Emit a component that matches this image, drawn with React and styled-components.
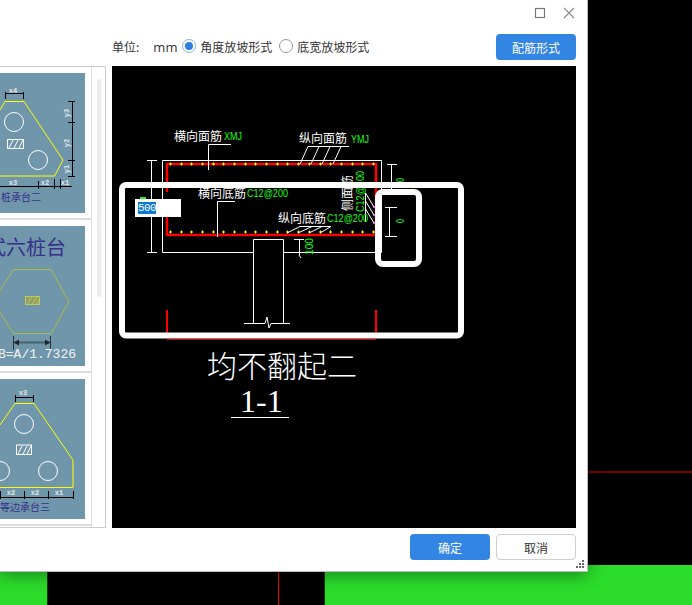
import React from 'react';
import styled, { createGlobalStyle } from 'styled-components';

const GlobalStyle = createGlobalStyle`
  html, body {
    margin: 0;
    padding: 0;
    background: #000;
    overflow: hidden;
  }
  body {
    font-family: "Noto Sans CJK SC", "Liberation Sans", sans-serif;
  }
`;

const Page = styled.div`
  position: relative;
  width: 692px;
  height: 605px;
  display: flex;
  flex-direction: column;
  overflow: hidden;
`;

const BackdropTop = styled.div`
  position: relative;
  height: 565px;
  background: #000;
`;

const BackdropLine = styled.div`
  position: absolute;
  left: 588px;
  right: 0;
  top: 471px;
  height: 2px;
  background: #7c0000;
`;

const BackdropBottom = styled.div`
  flex: 1;
  display: flex;
`;

const GreenStrip = styled.div`
  flex: ${p => (p.$grow ? 1 : 'none')};
  width: ${p => (p.$grow ? 'auto' : '47px')};
  background: #2bdc2b;
`;

const BlackStrip = styled.div`
  position: relative;
  width: 278px;
  background: #000;
  border-left: 1px solid #0d3a0d;
  border-right: 1px solid #0d3a0d;
  box-sizing: border-box;
`;

const BlackStripLine = styled.div`
  position: absolute;
  left: 230px;
  top: 0;
  bottom: 0;
  width: 1px;
  background: #f00000;
`;

const Dialog = styled.div`
  position: absolute;
  left: 0;
  top: 0;
  width: 588px;
  height: 572px;
  box-sizing: border-box;
  display: flex;
  flex-direction: column;
  background: #fff;
  border-right: 1px solid #bdbdbd;
  border-bottom: 1px solid #bdbdbd;
  box-shadow: 0 3px 16px rgba(0, 0, 0, 0.4);
`;

const TitleBar = styled.div`
  height: 33px;
  flex: none;
  display: flex;
  justify-content: flex-end;
  align-items: flex-start;
  gap: 17px;
  padding: 7px 12px 0 0;
  box-sizing: border-box;
`;

const WindowIcon = styled.svg`
  display: block;
  width: 12px;
  height: 12px;
  fill: none;
  stroke: ${p => p.$stroke};
  stroke-width: 1.2;
`;

const Toolbar = styled.div`
  height: 33px;
  flex: none;
  display: flex;
  align-items: flex-start;
  padding: 1px 11px 0 112px;
  box-sizing: border-box;
  font-size: 12px;
  color: #333;
`;

const ToolLabel = styled.span`
  margin-top: 4px;
  line-height: 18px;
  margin-right: ${p => p.$gap || 0}px;
  white-space: nowrap;
`;

const Unit = styled(ToolLabel)`
  font-family: "Open Sans", "Liberation Sans", sans-serif;
  font-size: 13px;
  width: 29px;
`;

const Radio = styled.span`
  flex: none;
  width: 14px;
  height: 14px;
  margin: 5px 4px 0 0;
  box-sizing: border-box;
  border-radius: 50%;
  border: 1px solid ${p => (p.$on ? '#8ab4e8' : '#9a9a9a')};
  background: #fff;
  display: flex;
  align-items: center;
  justify-content: center;
  &::after {
    content: '';
    width: 8px;
    height: 8px;
    border-radius: 50%;
    background: ${p => (p.$on ? '#2f7fe3' : 'transparent')};
  }
`;

const Button = styled.div`
  width: 80px;
  height: 26px;
  flex: none;
  box-sizing: border-box;
  border-radius: 4px;
  display: flex;
  align-items: center;
  justify-content: center;
  font-size: 12px;
  background: ${p => (p.$primary ? '#3385e4' : '#fff')};
  color: ${p => (p.$primary ? '#fff' : '#333')};
  border: ${p => (p.$primary ? 'none' : '1px solid #cfcfcf')};
`;

const RightButton = styled(Button)`
  margin-left: auto;
`;

const Body = styled.div`
  height: 462px;
  flex: none;
  display: flex;
  gap: 6px;
`;

const ListBox = styled.div`
  width: 106px;
  flex: none;
  box-sizing: border-box;
  display: flex;
  border-top: 1px solid #ccc;
  border-right: 1px solid #ccc;
  border-bottom: 1px solid #ccc;
`;

const Items = styled.div`
  width: 92px;
  flex: none;
  box-sizing: border-box;
  border-right: 1px solid #ddd;
`;

const Item = styled.div`
  height: 153px;
  box-sizing: border-box;
  padding-top: 6px;
  border-bottom: 2px solid #dcdcdc;
`;

const Thumb = styled.svg`
  display: block;
  width: 85px;
  height: 140px;
  background: #7096ab;
  fill: none;
  font-family: "Noto Sans CJK SC", sans-serif;
`;

const DimLabel = styled.text`
  font-family: "Liberation Mono", monospace;
  font-size: 7px;
  font-weight: bold;
  fill: #e6e6e6;
  stroke: none;
  text-anchor: middle;
`;

const Caption = styled.text`
  font-size: ${p => p.$size || 10}px;
  fill: #37308a;
  stroke: none;
  text-anchor: end;
`;

const Formula = styled.text`
  font-family: "Liberation Mono", monospace;
  font-size: 13px;
  fill: #f2f2f2;
  stroke: none;
  text-anchor: end;
`;

const ScrollTrack = styled.div`
  flex: 1;
  padding: 12px 0 0 5px;
`;

const ScrollThumb = styled.div`
  width: 4px;
  height: 218px;
  border-radius: 2px;
  background: #ececec;
`;

const Canvas = styled.div`
  position: relative;
  width: 464px;
  flex: none;
  background: #000;
  overflow: hidden;
`;

const Drawing = styled.svg`
  display: block;
  width: 464px;
  height: 462px;
  fill: none;
  stroke: #fff;
  font-family: "Noto Sans CJK SC", sans-serif;
`;

const WhiteText = styled.text`
  font-size: ${p => p.$size || 12}px;
  font-weight: ${p => (p.$size ? 300 : 400)};
  fill: #fff;
  stroke: none;
`;

const GreenText = styled.text`
  font-family: "Liberation Sans", sans-serif;
  font-size: 11px;
  fill: #19ff19;
  stroke: none;
`;

const SerifText = styled.text`
  font-family: "Liberation Serif", serif;
  font-size: ${p => p.$size}px;
  fill: #fff;
  stroke: none;
`;

const EditBox = styled.div`
  position: absolute;
  left: 23px;
  top: 133px;
  width: 46px;
  height: 18px;
  box-sizing: border-box;
  padding: 3px 0 0 3px;
  background: #fff;
  display: flex;
  align-items: flex-start;
`;

const Selected = styled.span`
  font-family: "Liberation Mono", monospace;
  font-size: 11px;
  line-height: 12px;
  height: 12px;
  width: 18px;
  letter-spacing: -0.6px;
  background: #0a78d7;
  color: #fff;
`;

const Footer = styled.div`
  flex: 1;
  position: relative;
  display: flex;
  justify-content: flex-end;
  gap: 6px;
  padding: 6px 11px 0 0;
`;

const Grip = styled.svg`
  position: absolute;
  right: 3px;
  bottom: 3px;
  width: 8px;
  height: 8px;
  fill: #666;
`;

const dotXs = Array.from({ length: 20 }, (_, i) => Math.round(170 + i * 10.68) + 0.5);

function Dot({ x, y }) {
  return <path d={`M${x - 1.5} ${y}h3M${x} ${y - 1.5}v3`} stroke="#ffff00" />;
}

function ThumbOne() {
  return (
    <Thumb viewBox="0 73 85 140">
      <path d="M0 110L5 101.5H24L63 160L54.5 176H0" stroke="#ffff00" />
      <circle cx="14" cy="122" r="9.5" stroke="#fff" />
      <circle cx="38" cy="160" r="9.5" stroke="#fff" />
      <rect x="7.5" y="139.5" width="16" height="9" stroke="#fff" />
      <path d="M9 148l4-8M14 148l4-8M19 148l4-8" stroke="#fff" />
      <path d="M5.5 92v7M5.5 93.5H23.5M23.5 92v7" stroke="#000" />
      <DimLabel x="13" y="93">x4</DimLabel>
      <path d="M72.5 101.5V176.5M68 101.5h7M68 122.5h7M68 160.5h7M68 176.5h7" stroke="#000" />
      <DimLabel transform="translate(69 113) rotate(-90)">y3</DimLabel>
      <DimLabel transform="translate(69 143) rotate(-90)">y2</DimLabel>
      <DimLabel transform="translate(69 169) rotate(-90)">y1</DimLabel>
      <path d="M0 186.5H72M38.5 181v8M54.5 179v10M60.5 179v10" stroke="#000" />
      <DimLabel x="13" y="185">x3</DimLabel>
      <DimLabel x="45" y="185">x2</DimLabel>
      <DimLabel x="65" y="185">x1</DimLabel>
      <Caption x="41" y="201">桩承台二</Caption>
    </Thumb>
  );
}

function ThumbTwo() {
  return (
    <Thumb viewBox="0 226 85 140">
      <Caption x="66" y="255" $size={20}>式六桩台</Caption>
      <path d="M13.5 269.5H51L69 301.5L51 333.5H13.5L-7 301.5Z" stroke="#b3ba4a" />
      <rect x="25.5" y="296.5" width="14" height="8" stroke="#c2c84a" fill="#8f9f70" />
      <path d="M27 304l5-7M32 304l5-7M36 304l3-4" stroke="#c2c84a" />
      <path d="M13.5 336v14M50.5 336v14" stroke="#333" />
      <path d="M14 342.5H50" stroke="#47606e" strokeWidth="2" />
      <path d="M14 342.5l5-3v6ZM50 342.5l-5-3v6Z" fill="#222" stroke="none" />
      <Formula x="76" y="358">B=A/1.7326</Formula>
    </Thumb>
  );
}

function ThumbThree() {
  return (
    <Thumb viewBox="0 379 85 140">
      <path d="M0 425L15 403.5H34L73 460V487.5H0" stroke="#ffff00" />
      <circle cx="24" cy="424" r="9.5" stroke="#fff" />
      <circle cx="48" cy="471" r="9.5" stroke="#fff" />
      <circle cx="0" cy="471" r="9.5" stroke="#fff" />
      <rect x="16.5" y="445" width="15" height="9.5" stroke="#fff" />
      <path d="M18 454l4-8M23 454l4-8M27 454l4-8" stroke="#fff" />
      <path d="M15.5 395v7M15.5 397.5H33.5M33.5 395v7" stroke="#000" />
      <DimLabel x="23" y="395">x3</DimLabel>
      <path d="M0 497.5H73.5M0.5 491v8M24.5 491v8M48.5 491v8M73.5 491v8" stroke="#000" />
      <DimLabel x="11" y="495">x2</DimLabel>
      <DimLabel x="35" y="495">x2</DimLabel>
      <DimLabel x="59" y="495">x1</DimLabel>
      <Caption x="50" y="511">等边承台三</Caption>
    </Thumb>
  );
}

function SectionDrawing() {
  return (
    <Drawing viewBox="112 66 464 462">
      {/* concrete outline and column */}
      <path d="M162.5 252.5V160.5H381.5V252.5H283.5M253.5 252.5H162.5" />
      <path d="M253.5 323V239.5H283.5V323" />
      <path d="M244 323.5H265L267 317L269 328L271 323.5H290" />

      {/* rebar */}
      <path d="M167 192V164H376V235H167V217" stroke="#ff0000" strokeWidth="2.5" />
      {dotXs.map(x => <Dot key={`t${x}`} x={x} y={164} />)}
      {dotXs.map(x => <Dot key={`b${x}`} x={x} y={232} />)}
      <path d="M167 310V334M376 310V334" stroke="#ff0000" strokeWidth="2" />
      <path d="M167 339.5H376" stroke="#e00000" />
      <rect x="373" y="206" width="2" height="2" fill="#ff33ff" stroke="none" />
      <rect x="373" y="214" width="2" height="2" fill="#ff33ff" stroke="none" />
      <rect x="373" y="222" width="2" height="2" fill="#ff33ff" stroke="none" />

      {/* leaders */}
      <path d="M208.5 170V144.5H231" />
      <path d="M349 146.5H308M308 146.5L300 164M319 146.5L311 164M330 146.5L322 164M341 146.5L333 164" />
      <path d="M217.5 237V201.5H235" />
      <path d="M331 226.5H300M300 226.5L287 233M312 226.5L298 233M322 226.5L309 233M331 226.5L320 233" />
      <path d="M365.5 193V222M365.5 193L374 207M365.5 201L374 215M365.5 209L374 223" />

      {/* dimensions */}
      <path d="M151.5 160V253M147 160.5H157M147 252.5H157" />
      <path d="M299.5 239V255M294 239.5H304M299 255l2 3" />
      <path d="M391.5 164V195M387 164.5H397" />
      <path d="M389.5 207V237M385 207.5H397M385 236.5H397" />
      <rect x="140" y="197" width="6" height="2" fill="#19ff19" stroke="none" />

      {/* labels */}
      <WhiteText x="174" y="141">横向面筋</WhiteText>
      <GreenText x="224" y="140" textLength="18" lengthAdjust="spacingAndGlyphs">XMJ</GreenText>
      <WhiteText x="299" y="143">纵向面筋</WhiteText>
      <GreenText x="351" y="143" textLength="18" lengthAdjust="spacingAndGlyphs">YMJ</GreenText>
      <WhiteText x="198" y="198">横向底筋</WhiteText>
      <GreenText x="247" y="197" textLength="41" lengthAdjust="spacingAndGlyphs">C12@200</GreenText>
      <WhiteText x="278" y="223">纵向底筋</WhiteText>
      <GreenText x="327" y="222" textLength="41" lengthAdjust="spacingAndGlyphs">C12@200</GreenText>
      <WhiteText transform="translate(352 211) rotate(-90)">侧面筋</WhiteText>
      <GreenText transform="translate(364 212) rotate(-90)" textLength="41" lengthAdjust="spacingAndGlyphs">C12@200</GreenText>
      <GreenText transform="translate(313 255) rotate(-90)" textLength="17" lengthAdjust="spacingAndGlyphs">100</GreenText>
      <GreenText transform="translate(404 182) rotate(-90)" textLength="4" lengthAdjust="spacingAndGlyphs">0</GreenText>
      <GreenText transform="translate(404 223) rotate(-90)" textLength="4" lengthAdjust="spacingAndGlyphs">0</GreenText>

      {/* highlight frames */}
      <rect x="122" y="185" width="339" height="150.5" rx="4" strokeWidth="6" />
      <rect x="378" y="192" width="41" height="72" rx="5" strokeWidth="6" />

      {/* section title */}
      <WhiteText x="207" y="377" $size={30}>均不翻起二</WhiteText>
      <SerifText x="240" y="412" $size={32}>1-1</SerifText>
      <path d="M231 417.5H289" />
    </Drawing>
  );
}

export default function App() {
  return (
    <Page>
      <GlobalStyle />
      <BackdropTop>
        <BackdropLine />
      </BackdropTop>
      <BackdropBottom>
        <GreenStrip />
        <BlackStrip>
          <BlackStripLine />
        </BlackStrip>
        <GreenStrip $grow />
      </BackdropBottom>

      <Dialog>
        <TitleBar>
          <WindowIcon viewBox="0 0 12 12" $stroke="#777">
            <rect x="1.5" y="1.5" width="9" height="9" />
          </WindowIcon>
          <WindowIcon viewBox="0 0 12 12" $stroke="#8c8c8c">
            <path d="M1 1L11 11M11 1L1 11" />
          </WindowIcon>
        </TitleBar>

        <Toolbar>
          <ToolLabel $gap={14}>单位:</ToolLabel>
          <Unit>mm</Unit>
          <Radio $on />
          <ToolLabel $gap={7}>角度放坡形式</ToolLabel>
          <Radio />
          <ToolLabel>底宽放坡形式</ToolLabel>
          <RightButton $primary>配筋形式</RightButton>
        </Toolbar>

        <Body>
          <ListBox>
            <Items>
              <Item><ThumbOne /></Item>
              <Item><ThumbTwo /></Item>
              <Item><ThumbThree /></Item>
            </Items>
            <ScrollTrack>
              <ScrollThumb />
            </ScrollTrack>
          </ListBox>
          <Canvas>
            <SectionDrawing />
            <EditBox>
              <Selected>500</Selected>
            </EditBox>
          </Canvas>
        </Body>

        <Footer>
          <Button $primary>确定</Button>
          <Button>取消</Button>
          <Grip viewBox="0 0 8 8">
            <rect x="6" y="0" width="2" height="2" />
            <rect x="3" y="3" width="2" height="2" />
            <rect x="6" y="3" width="2" height="2" />
            <rect x="0" y="6" width="2" height="2" />
            <rect x="3" y="6" width="2" height="2" />
            <rect x="6" y="6" width="2" height="2" />
          </Grip>
        </Footer>
      </Dialog>
    </Page>
  );
}
